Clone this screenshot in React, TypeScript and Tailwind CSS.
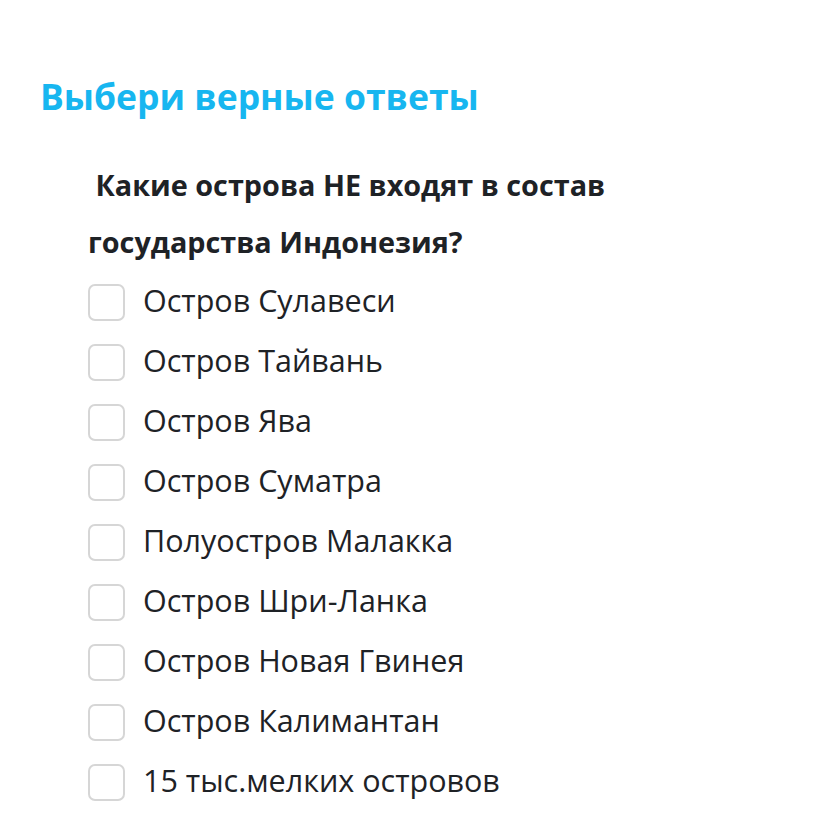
const options = [
  "Остров Сулавеси",
  "Остров Тайвань",
  "Остров Ява",
  "Остров Суматра",
  "Полуостров Малакка",
  "Остров Шри-Ланка",
  "Остров Новая Гвинея",
  "Остров Калимантан",
  "15 тыс.мелких островов",
];

export default function App() {
  return (
    <div className="w-[826px] h-[827px] bg-white font-['Open_Sans',sans-serif] text-[#1e2226]">
      <h1 className="pt-[72px] pl-[40px] text-[35.5px] leading-[48px] font-bold text-[#17b6f0]">
        Выбери верные ответы
      </h1>

      <div className="pl-[88px] pt-[36px]">
        <p className="text-[28.8px] leading-[57px] font-bold w-[600px]">
          &nbsp;Какие острова НЕ входят в состав государства Индонезия?
        </p>

        <div className="flex flex-col pt-[2px]">
          {options.map((opt) => (
            <label key={opt} className="flex items-center gap-[18px] h-[60px]">
              <span className="w-[37px] h-[37px] rounded-[7px] border-2 border-[#d6d6d6] bg-white shrink-0" />
              <span className="text-[30.5px] leading-none -mt-[3px]">{opt}</span>
            </label>
          ))}
        </div>
      </div>
    </div>
  );
}
